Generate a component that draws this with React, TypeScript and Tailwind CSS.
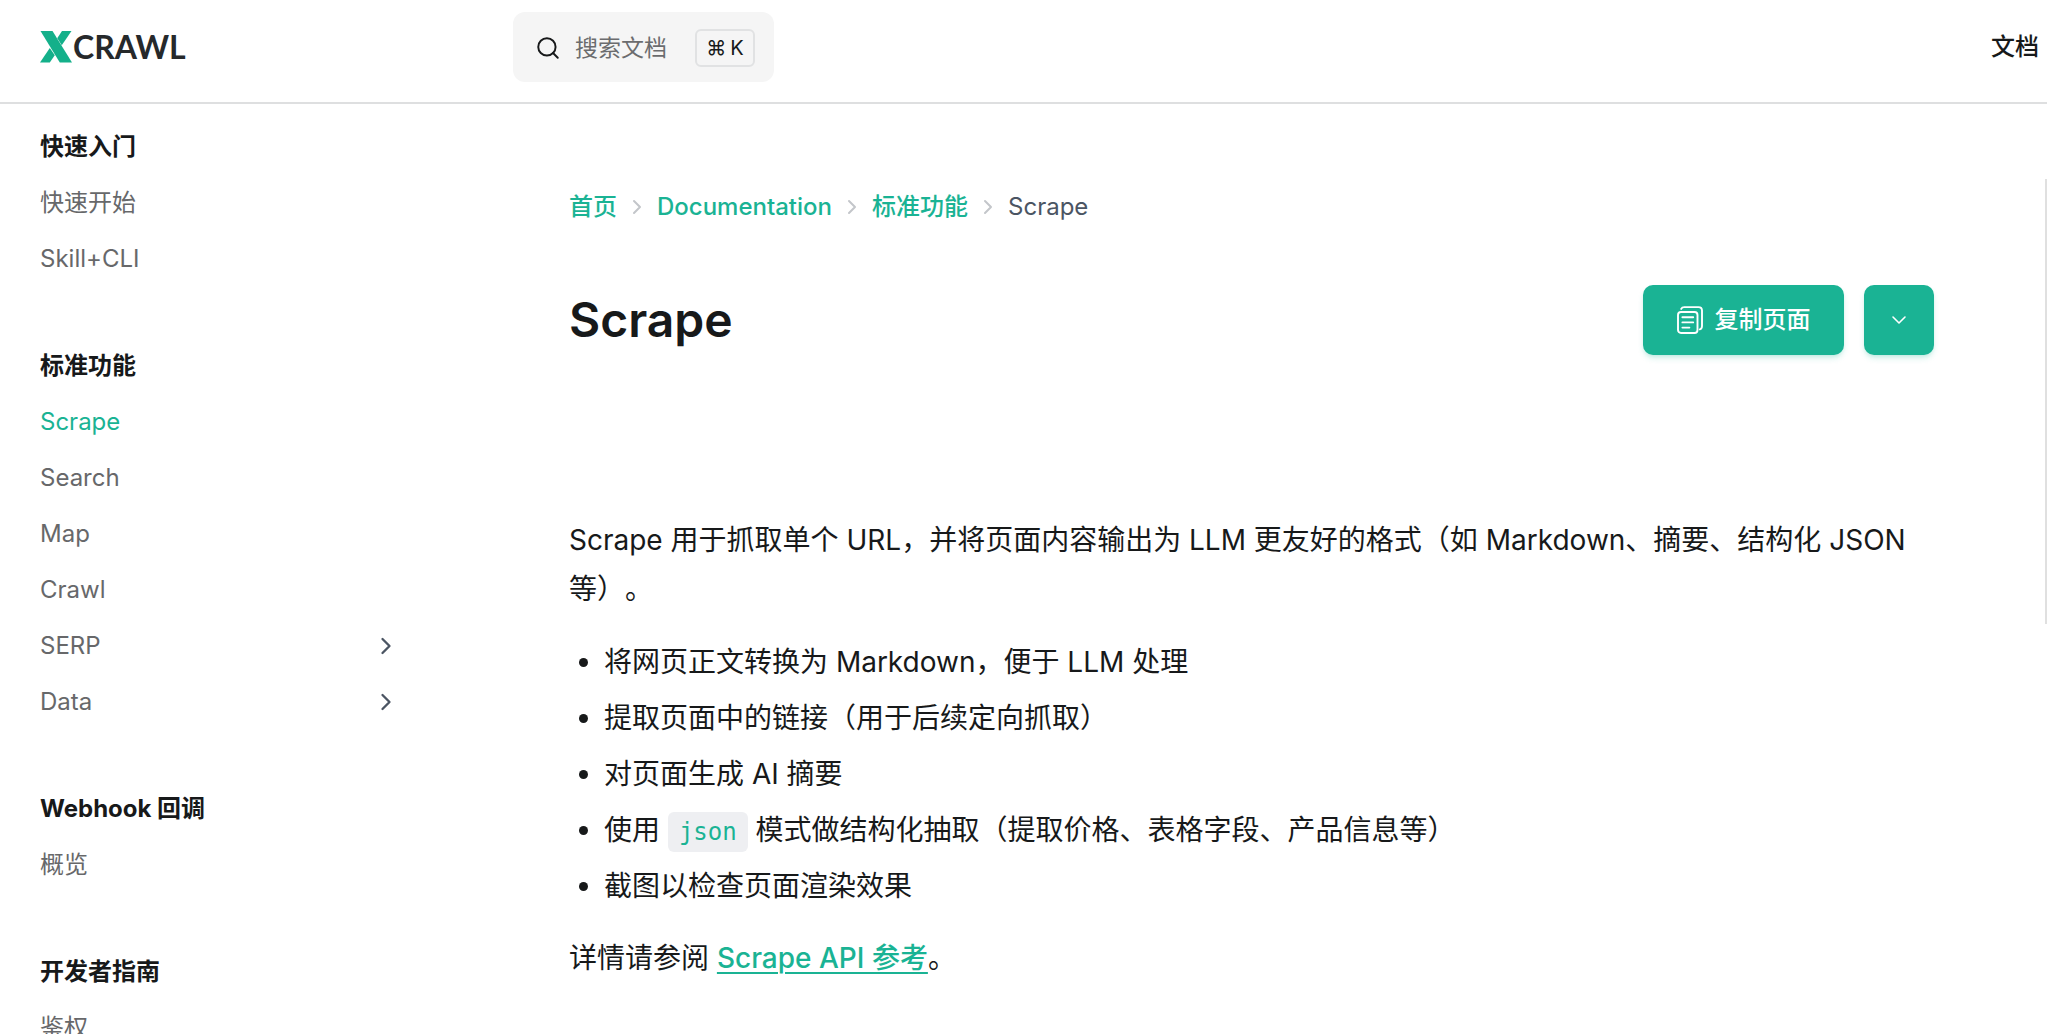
import { ChevronDown, ChevronRight, Search } from "lucide-react";

type NavItem = { label: string; active?: boolean; expandable?: boolean };
type NavGroup = { title: string; items: NavItem[] };

const groups: NavGroup[] = [
  { title: "快速入门", items: [{ label: "快速开始" }, { label: "Skill+CLI" }] },
  {
    title: "标准功能",
    items: [
      { label: "Scrape", active: true },
      { label: "Search" },
      { label: "Map" },
      { label: "Crawl" },
      { label: "SERP", expandable: true },
      { label: "Data", expandable: true },
    ],
  },
  { title: "Webhook 回调", items: [{ label: "概览" }] },
  { title: "开发者指南", items: [{ label: "鉴权" }] },
];

const crumbs = ["首页", "Documentation", "标准功能"];

function Logo() {
  return (
    <a href="#" aria-label="XCRAWL" className="flex items-center gap-px">
      <svg viewBox="0 0 32 32" className="size-8" fill="#14b08a" aria-hidden="true">
        <path d="M0.5 0H12.5L32 31.5H19.8Z" />
        <path d="M22 0H31.5L21.8 14.2L17.2 7.2Z" />
        <path d="M0 31.5H9.8L14.8 24.2L9.8 17Z" />
      </svg>
      <span className="font-[Lato] text-[32px] leading-8 font-bold text-[#26292b]">CRAWL</span>
    </a>
  );
}

function CopyIcon() {
  return (
    <svg
      viewBox="0 0 26 28"
      className="h-7 w-[26px]"
      fill="none"
      stroke="currentColor"
      strokeWidth="1.9"
      strokeLinecap="round"
      strokeLinejoin="round"
      aria-hidden="true"
    >
      <rect x="1" y="6" width="19.5" height="21" rx="3" />
      <path d="M4.2 2.9C4.8 1.7 5.8 1.1 7.2 1.1H21.5C23.6 1.1 25 2.5 25 4.6V20C25 21.8 24.2 23 22.8 23.4" />
      <path d="M5.4 11.2H16.2M5.4 16.4H16.2M5.4 21.6H12.4" />
    </svg>
  );
}

function Header() {
  return (
    <header className="flex h-26 shrink-0 items-start justify-between border-b-2 border-[#dedfe0] pr-2 pl-10">
      <div className="flex flex-1 items-start">
        <div className="flex w-[473px] pt-[31px]">
          <Logo />
        </div>
        <button
          type="button"
          className="mt-3 flex h-[70px] items-center rounded-xl bg-[#f5f5f5] pt-0.5 pr-[19px] pl-[22px] text-[#6b6c6e]"
        >
          <Search className="mr-3.5 size-[26px] text-[#17191a]" strokeWidth={1.8} />
          <span className="mr-7 text-[23px]">搜索文档</span>
          <kbd className="flex h-[38px] w-[60px] items-center justify-center gap-1 rounded-md border-2 border-[#e1e2e3] font-[Inter,'DejaVu_Sans',sans-serif] text-xl text-[#17191a]">
            <span>⌘</span>
            <span>K</span>
          </kbd>
        </button>
      </div>
      <a href="#" className="pt-[29px] text-2xl leading-9 font-medium">
        文档
      </a>
    </header>
  );
}

function Sidebar() {
  return (
    <nav aria-label="文档导航" className="w-[400px] shrink-0 pt-[15px] pl-10 text-2xl">
      {groups.map((group) => (
        <section key={group.title} className="mb-[51px]">
          <h2 className="flex h-14 items-center font-bold">{group.title}</h2>
          <ul>
            {group.items.map((item) => (
              <li key={item.label} className="flex h-14 items-center justify-between text-[#67686a]">
                <a href="#" className={item.active ? "text-[#1ab394]" : ""}>
                  {item.label}
                </a>
                {item.expandable && (
                  <button type="button" aria-label={`展开 ${item.label}`} className="text-[#4b5563]">
                    <ChevronRight className="size-7" strokeWidth={2} />
                  </button>
                )}
              </li>
            ))}
          </ul>
        </section>
      ))}
    </nav>
  );
}

function Article() {
  return (
    <main className="min-w-0 flex-1 pt-[85px] pr-[113px] pl-[169px]">
      <nav aria-label="面包屑" className="flex h-9 items-center gap-2 text-2xl font-medium text-[#1ab394]">
        {crumbs.map((crumb) => (
          <span key={crumb} className="flex items-center gap-2">
            <a href="#">{crumb}</a>
            <ChevronRight className="size-6 text-[#c3c6ca]" strokeWidth={2} />
          </span>
        ))}
        <span className="font-normal text-[#4b5563]">Scrape</span>
      </nav>

      <div className="mt-[60px] flex h-[70px] items-center justify-between">
        <h1 className="text-5xl font-semibold">Scrape</h1>
        <div className="flex gap-5">
          <button
            type="button"
            className="flex h-[70px] w-[201px] items-center justify-center gap-3 rounded-[10px] bg-[#1ab394] text-2xl font-medium text-white shadow-md shadow-[#1ab394]/20"
          >
            <CopyIcon />
            复制页面
          </button>
          <button
            type="button"
            aria-label="更多操作"
            className="flex size-[70px] items-center justify-center rounded-[10px] bg-[#1ab394] text-white shadow-md shadow-[#1ab394]/20"
          >
            <ChevronDown className="size-6" strokeWidth={1.6} />
          </button>
        </div>
      </div>

      <div className="mt-[161px] text-[28px] leading-12 [text-spacing-trim:space-all]">
        <p className="leading-[49px]">
          Scrape 用于抓取单个 URL，并将页面内容输出为 LLM 更友好的格式（如 Markdown、摘要、结构化 JSON 等）。
        </p>
        <ul className="mt-6 flex list-disc flex-col gap-2 pl-[35px]">
          <li>将网页正文转换为 Markdown，便于 LLM 处理</li>
          <li>提取页面中的链接（用于后续定向抓取）</li>
          <li>对页面生成 AI 摘要</li>
          <li>
            使用{" "}
            <code className="rounded-md bg-[#eeeff2] px-[11px] py-1.5 font-['DejaVu_Sans_Mono',monospace] text-2xl text-[#1ab394]">
              json
            </code>{" "}
            模式做结构化抽取（提取价格、表格字段、产品信息等）
          </li>
          <li>截图以检查页面渲染效果</li>
        </ul>
        <p className="mt-6 leading-[49px]">
          详情请参阅{" "}
          <a href="#" className="font-medium text-[#1ab394] underline decoration-2 underline-offset-4">
            Scrape API 参考
          </a>
          。
        </p>
      </div>
    </main>
  );
}

export default function App() {
  return (
    <div
      lang="zh-CN"
      className="relative flex h-screen flex-col overflow-hidden bg-white font-[Inter,'Noto_Sans_CJK_SC',sans-serif] text-[#17191a]"
    >
      <Header />
      <div className="flex min-h-0 flex-1">
        <Sidebar />
        <Article />
      </div>
      <div className="absolute top-[179px] right-0 h-[445px] w-0.5 bg-[#e0e0e0]" aria-hidden="true" />
    </div>
  );
}
